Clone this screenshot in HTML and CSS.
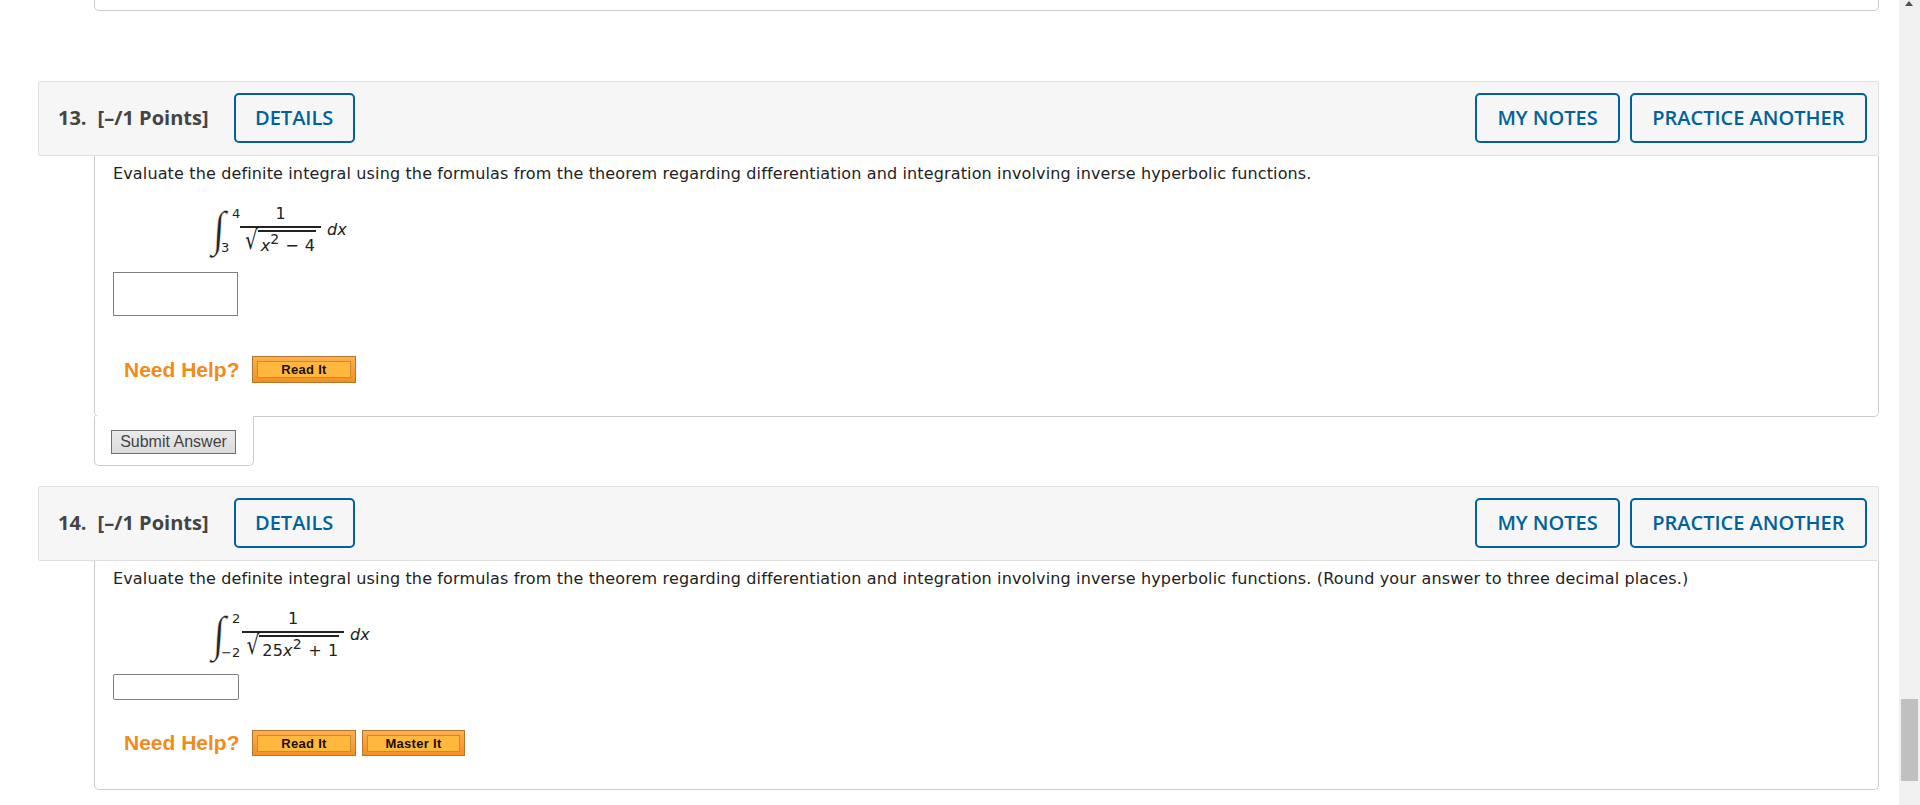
FILE: index.html
```html
<!DOCTYPE html>
<html lang="en">
<head>
    <meta charset="UTF-8">
    <title>Assignment</title>
    <link rel="stylesheet" href="styles.css">
</head>
<body>
    <div class="page">
        <div class="prev-card"></div>

        <div class="question q13">
            <div class="q-header">
                <span class="q-title"><span class="q-num">13.</span>[–/1 Points]</span>
                <a class="q-btn q-btn-details">DETAILS</a>
                <span class="spacer"></span>
                <a class="q-btn q-btn-notes">MY NOTES</a>
                <a class="q-btn">PRACTICE ANOTHER</a>
            </div>
            <div class="q-body">
                <p class="q-text">Evaluate the definite integral using the formulas from the theorem regarding differentiation and integration involving inverse hyperbolic functions.</p>
                <div class="math">
                    <span class="int">∫</span>
                    <span class="limits"><span>4</span><span>3</span></span>
                    <span class="frac">
                        <span class="num">1</span>
                        <span class="den"><span class="root">√</span><span class="radicand"><i>x</i><sup>2</sup> − 4</span></span>
                    </span>
                    <span class="dx"><i>dx</i></span>
                </div>
                <div class="answer answer-tall"></div>
                <div class="help">
                    <span class="help-label">Need Help?</span>
                    <a class="help-btn"><span>Read It</span></a>
                </div>
            </div>
            <div class="submit-tab">
                <button class="submit">Submit Answer</button>
            </div>
        </div>

        <div class="question q14">
            <div class="q-header">
                <span class="q-title"><span class="q-num">14.</span>[–/1 Points]</span>
                <a class="q-btn q-btn-details">DETAILS</a>
                <span class="spacer"></span>
                <a class="q-btn q-btn-notes">MY NOTES</a>
                <a class="q-btn">PRACTICE ANOTHER</a>
            </div>
            <div class="q-body">
                <p class="q-text">Evaluate the definite integral using the formulas from the theorem regarding differentiation and integration involving inverse hyperbolic functions. (Round your answer to three decimal places.)</p>
                <div class="math">
                    <span class="int">∫</span>
                    <span class="limits limits-wide"><span>2</span><span>−2</span></span>
                    <span class="frac frac-wide">
                        <span class="num">1</span>
                        <span class="den"><span class="root">√</span><span class="radicand">25<i>x</i><sup>2</sup> + 1</span></span>
                    </span>
                    <span class="dx"><i>dx</i></span>
                </div>
                <div class="answer answer-short"></div>
                <div class="help help-last">
                    <span class="help-label">Need Help?</span>
                    <a class="help-btn"><span>Read It</span></a>
                    <a class="help-btn help-btn-master"><span>Master It</span></a>
                </div>
            </div>
        </div>
    </div>

    <div class="scrollbar">
        <div class="arrow-up"></div>
        <div class="thumb"></div>
    </div>
</body>
</html>
```

FILE: styles.css
```css
* {
    margin: 0;
    padding: 0;
    box-sizing: border-box;
}

html, body {
    height: 805px;
    overflow: hidden;
    background: white;
}

body {
    font-family: "DejaVu Sans", sans-serif;
    color: #222;
    position: relative;
}

.page {
    width: 1879px;
    padding-left: 38px;
}

.prev-card {
    height: 11px;
    margin-left: 56px;
    border: 1px solid #ccc;
    border-top: none;
    border-radius: 0 0 5px 5px;
}

.q13 {
    margin-top: 70px;
}

.q14 {
    margin-top: 20px;
}

.q-header {
    display: flex;
    align-items: center;
    gap: 10px;
    height: 75px;
    padding: 0 11px 1px 19px;
    background: #f6f6f6;
    border: 1px solid #e0e0e0;
    border-radius: 2px;
}

.q-title {
    display: flex;
    padding-bottom: 2px;
    font-family: "Open Sans", sans-serif;
    font-size: 20px;
    font-weight: 700;
    color: #444;
    margin-right: 15px;
}

.q-num {
    margin-right: 11px;
}

.spacer {
    flex: 1;
}

.q-btn {
    display: flex;
    align-items: center;
    height: 50px;
    padding: 0 20.5px 2px;
    font-family: "Open Sans", sans-serif;
    font-size: 20px;
    font-weight: 600;
    color: #00629b;
    background: #f6f6f6;
    border: 2px solid #00629b;
    border-radius: 5px;
}

.q-btn-details {
    padding: 0 19.5px 2px;
}

.q-btn-notes {
    padding: 0 20px 2px;
}

.q-body {
    margin-left: 56px;
    padding: 7px 18px 0;
    border: 1px solid #ccc;
    border-top: none;
    border-radius: 0 0 5px 5px;
}

.q13 .q-body {
    height: 261px;
}

.q14 .q-body {
    height: 229px;
}

.q-text {
    font-size: 16px;
    line-height: 22px;
    letter-spacing: 0.14px;
    color: #222;
    white-space: nowrap;
}

.math {
    display: flex;
    height: 53px;
    margin: 22px 0 0 97px;
    font-size: 16px;
    color: #222;
}

.int {
    width: 22px;
    height: 50px;
    margin-top: -3px;
    font-family: "Liberation Serif", serif;
    font-size: 54px;
    line-height: 50px;
    text-align: right;
    -webkit-text-stroke: 0.7px white;
    transform: translateX(-7px) scale(0.8, 0.9) skewX(-4deg);
    transform-origin: 100% 50%;
}

.limits {
    display: flex;
    flex-direction: column;
    justify-content: space-between;
    width: 8px;
    height: 48px;
    font-size: 13px;
    line-height: 14px;
}

.limits span:last-child {
    margin-left: -11px;
    white-space: nowrap;
}

.limits-wide {
    width: 10px;
}

.frac {
    display: flex;
    flex-direction: column;
    align-items: center;
    width: 81px;
    height: 53px;
}

.frac-wide {
    width: 102px;
}

.num {
    width: 100%;
    height: 21px;
    line-height: 14px;
    text-align: center;
    border-bottom: 2px solid #222;
}

.den {
    display: flex;
    margin-top: 2px;
}

.root {
    font-size: 20px;
    line-height: 29px;
    transform: scaleY(1.3);
    transform-origin: 50% 100%;
}

.radicand {
    padding: 0 1px 0 3px;
    line-height: 27px;
    border-top: 2px solid #222;
    white-space: nowrap;
    word-spacing: 1px;
}

.frac-wide .radicand {
    letter-spacing: 0.2px;
}

.radicand sup {
    font-size: 14px;
    line-height: 0;
    vertical-align: 7px;
}

.dx {
    margin: 14px 0 0 6px;
    line-height: 18px;
}

.answer {
    width: 125px;
    background: white;
    border: 1px solid #808080;
}

.answer-tall {
    height: 44px;
    margin-top: 12px;
}

.answer-short {
    width: 126px;
    height: 26px;
    margin-top: 9px;
    border-radius: 2px;
}

.help {
    display: flex;
    align-items: center;
    gap: 6px;
    margin: 40px 0 0 11px;
}

.help-last {
    margin-top: 30px;
}

.help-label {
    width: 122px;
    font-family: "Liberation Sans", sans-serif;
    font-size: 21px;
    font-weight: 700;
    color: #f28a1c;
    white-space: nowrap;
}

.help-btn {
    display: block;
    width: 104px;
    height: 27px;
    padding: 4px;
    background: linear-gradient(#fbb050, #f39021);
    border: 1px solid #b5752d;
}

.help-last .help-btn {
    height: 26px;
}

.help-btn-master {
    width: 103px;
}

.help-btn span {
    display: block;
    height: 17px;
    font-family: "Liberation Sans", sans-serif;
    font-size: 13px;
    font-weight: 700;
    line-height: 16px;
    letter-spacing: 0.3px;
    text-align: center;
    color: #1a1000;
    background: #ffb83d;
    border: 1px solid #c98a30;
}

.submit-tab {
    position: relative;
    width: 160px;
    height: 50px;
    margin: -1px 0 0 56px;
    padding: 13px 0 0 16px;
    background: white;
    border: 1px solid #ccc;
    border-top: 1px solid white;
    border-radius: 0 0 5px 5px;
}

.submit {
    display: block;
    width: 125px;
    height: 24px;
    font-family: "Liberation Sans", sans-serif;
    font-size: 16px;
    color: #444;
    background: linear-gradient(#eaeaea, #dcdcdc);
    border: 1px solid #707070;
}

/* page scrollbar, sits over the right edge */
.scrollbar {
    position: absolute;
    top: 0;
    right: 0;
    width: 21px;
    height: 805px;
    background: #f0f0f0;
}

.arrow-up {
    position: absolute;
    top: 1px;
    left: 6px;
    width: 0;
    height: 0;
    border-left: 4.5px solid transparent;
    border-right: 4.5px solid transparent;
    border-bottom: 5px solid #505050;
}

.thumb {
    position: absolute;
    top: 699px;
    left: 2px;
    width: 17px;
    height: 82px;
    background: #c0c0c0;
}
```
